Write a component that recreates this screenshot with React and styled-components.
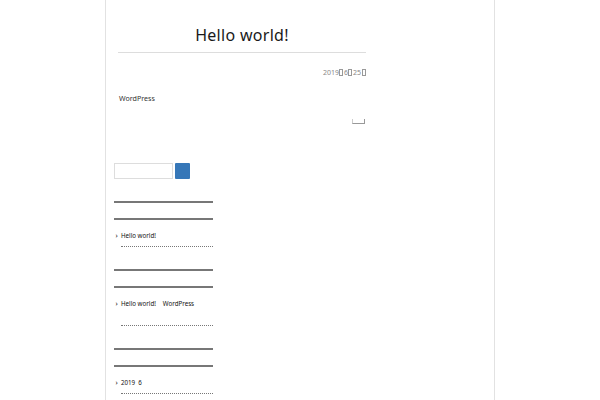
import React from "react";
import styled, { createGlobalStyle } from "styled-components";

const Global = createGlobalStyle`
  html, body { margin: 0; padding: 0; background: #fff; }
  body { font-family: "Noto Sans", "Open Sans", sans-serif; color: #333; }
`;

const Page = styled.div`
  width: 388px;
  margin: 0 auto;
  min-height: 400px;
  border-left: 1px solid #e2e2e2;
  border-right: 1px solid #e2e2e2;
  display: flow-root;
`;

const Main = styled.main`
  width: 248px;
  padding: 23px 0 0 12px;
`;

const Title = styled.h1`
  margin: 0;
  padding-bottom: 5px;
  font-size: 16px;
  line-height: 24px;
  font-weight: 400;
  text-align: center;
  color: #1a1a1a;
  letter-spacing: 0.3px;
  border-bottom: 1px solid #ddd;
`;

const DateLine = styled.div`
  display: flex;
  justify-content: flex-end;
  align-items: center;
  margin-top: 13px;
  height: 12px;
  font-size: 7px;
  color: #888;
  white-space: nowrap;
`;

const Tofu = styled.span`
  display: inline-block;
  box-sizing: border-box;
  width: 4px;
  height: 7px;
  border: 0.6px solid #999;
  margin: 0 0.5px;
  color: transparent;
  overflow: hidden;
  font-size: 1px;
  line-height: 6px;
`;

const Content = styled.p`
  margin: 14px 0 0 1px;
  font-size: 7.1px;
  line-height: 12px;
  color: #333;
`;

const Footer = styled.div`
  display: flex;
  justify-content: flex-end;
  margin-top: 15px;
  padding-right: 1px;
`;

const Bracket = styled.span`
  display: inline-block;
  width: 11px;
  height: 4px;
  border: 1px solid #999;
  border-top: none;
  border-left-color: #ccc;
`;

const Sidebar = styled.aside`
  width: 99px;
  padding-left: 8px;
  margin-top: 39px;
`;

const SearchForm = styled.form`
  display: flex;
  gap: 2px;
  margin: 0;
`;

const SearchInput = styled.input`
  width: 59px;
  height: 16px;
  box-sizing: border-box;
  border: 1px solid #ddd;
  padding: 0;
  margin: 0;
  outline: none;
`;

const SearchButton = styled.button`
  width: 15px;
  height: 16px;
  border: none;
  padding: 0;
  margin: 0;
  background: #3677b8;
  border-radius: 1px;
`;

const Widget = styled.section`
  margin-top: ${(p) => p.$top}px;
`;

const WidgetTitle = styled.h2`
  margin: 0;
  height: 15px;
  border-top: 2px solid #777;
  border-bottom: 2px solid #777;
`;

const List = styled.ul`
  list-style: none;
  margin: 0;
  padding: 0;
`;

const Item = styled.li`
  display: flex;
  align-items: flex-start;
  padding-top: 10px;
  font-size: 6.2px;
  line-height: 12px;
  color: #111;
`;

const Chevron = styled.span`
  width: 7px;
  flex: none;
  padding-left: 1.5px;
  box-sizing: border-box;
  font-size: 7px;
`;

const ItemText = styled.span`
  flex: 1;
  padding-bottom: ${(p) => p.$pb}px;
  border-bottom: 1px dotted #777;
`;

const Gap = styled.span`
  display: inline-block;
  width: ${(p) => p.$w}px;
`;

export default function App() {
  return (
    <>
      <Global />
      <Page>
        <Main>
          <Title>Hello world!</Title>
          <DateLine>
            2019<Tofu>年</Tofu>6<Tofu>月</Tofu>25<Tofu>日</Tofu>
          </DateLine>
          <Content>WordPress</Content>
          <Footer>
            <Bracket />
          </Footer>
        </Main>
        <Sidebar>
          <SearchForm onSubmit={(e) => e.preventDefault()}>
            <SearchInput type="text" />
            <SearchButton type="submit" />
          </SearchForm>
          <Widget $top={22}>
            <WidgetTitle />
            <List>
              <Item>
                <Chevron>›</Chevron>
                <ItemText $pb={4}>Hello world!</ItemText>
              </Item>
            </List>
          </Widget>
          <Widget $top={22}>
            <WidgetTitle />
            <List>
              <Item>
                <Chevron>›</Chevron>
                <ItemText $pb={15}>
                  Hello world!<Gap $w={7} />WordPress
                </ItemText>
              </Item>
            </List>
          </Widget>
          <Widget $top={22}>
            <WidgetTitle />
            <List>
              <Item>
                <Chevron>›</Chevron>
                <ItemText $pb={4}>
                  2019<Gap $w={3} />6
                </ItemText>
              </Item>
            </List>
          </Widget>
        </Sidebar>
      </Page>
    </>
  );
}
